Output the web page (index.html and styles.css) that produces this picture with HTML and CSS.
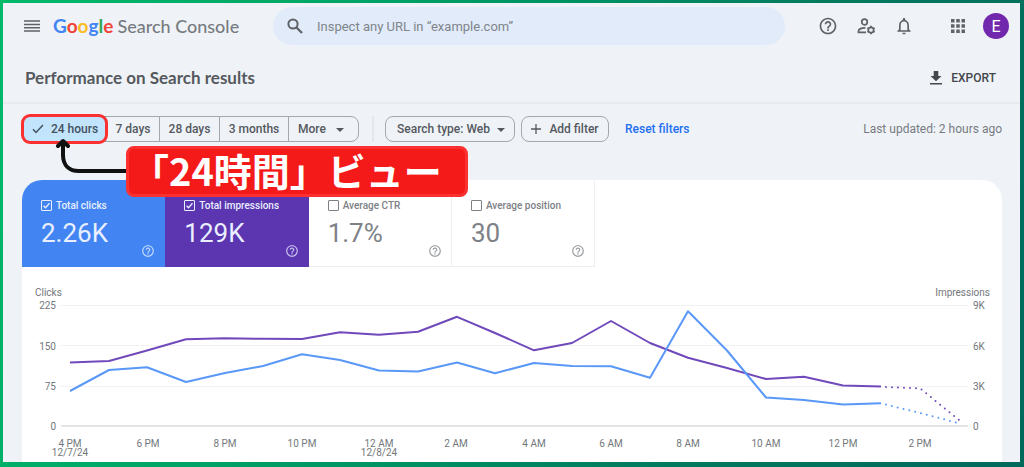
FILE: index.html
```html
<!DOCTYPE html>
<html lang="en">
<head>
<meta charset="utf-8">
<title>Google Search Console</title>
<link rel="stylesheet" href="styles.css">
</head>
<body>
<svg class="defs" aria-hidden="true">
  <symbol id="help" viewBox="0 0 24 24"><path d="M11 18h2v-2h-2v2zm1-16C6.48 2 2 6.48 2 12s4.480 10 10 10 10-4.480 10-10S17.520 2 12 2zm0 18c-4.410 0-8-3.590-8-8s3.590-8 8-8 8 3.590 8 8-3.590 8-8 8zm0-14c-2.210 0-4 1.790-4 4h2c0-1.100.9-2 2-2s2 .9 2 2c0 2-3 1.750-3 5h2c0-2.250 3-2.500 3-5 0-2.210-1.790-4-4-4z"/></symbol>
</svg>
<div class="app">
  <header class="topbar">
    <div class="brand">
      <button class="icon-btn" aria-label="Main menu">
        <svg class="icon-menu" viewBox="0 0 16 12"><path d="M0 1h16M0 4.400h16M0 7.700h16M0 11h16" stroke="currentColor" stroke-width="1.500"/></svg>
      </button>
      <a class="logo" href="#"><span class="wordmark"><span class="g-blue">G</span><span class="g-red">o</span><span class="g-yellow">o</span><span class="g-blue">g</span><span class="g-green">l</span><span class="g-red">e</span></span> <span class="product">Search Console</span></a>
    </div>
    <label class="search">
      <svg class="icon-search outline" viewBox="0 0 16 16" stroke="currentColor"><circle cx="6" cy="6" r="4.600" stroke-width="2"/><path d="M9.500 9.500L15 15" stroke-width="2.300"/></svg>
      <input class="search-input" type="text" aria-label="Inspect URL" placeholder="Inspect any URL in “example.com”">
    </label>
    <div class="tools">
      <button class="icon-btn" aria-label="Help"><svg class="icon-tool"><use href="#help"/></svg></button>
      <button class="icon-btn" aria-label="User settings">
        <svg class="icon-tool outline" viewBox="0 0 20 20" stroke="currentColor" stroke-width="1.700"><circle cx="8.500" cy="6" r="2.800"/><path d="M9.500 12C6 11.600 2.500 13 2.500 15v1.300H10"/><circle cx="15" cy="14" r="2.700"/><path d="M15 9.800v1.500M15 16.700v1.500M11.400 11.900l1.300.8M17.300 15.300l1.300.8M11.400 16.100l1.300-.8M17.300 12.700l1.300-.8"/></svg>
      </button>
      <button class="icon-btn" aria-label="Notifications">
        <svg class="icon-tool" viewBox="0 0 24 24"><path d="M12 22c1.100 0 2-.9 2-2h-4c0 1.100.9 2 2 2zm6-6v-5c0-3.070-1.630-5.640-4.500-6.320V4c0-.83-.67-1.500-1.500-1.500s-1.500.67-1.500 1.500v.68C7.640 5.360 6 7.920 6 11v5l-2 2v1h16v-1l-2-2zm-2 1H8v-6c0-2.480 1.510-4.500 4-4.500s4 2.020 4 4.500v6z"/></svg>
      </button>
      <button class="icon-btn apps" aria-label="Apps">
        <svg class="icon-apps" viewBox="0 0 14 14"><path d="M0 0h3.500v3.500H0zM5.250 0h3.500v3.500h-3.500zM10.500 0H14v3.500h-3.500zM0 5.250h3.500v3.500H0zM5.250 5.250h3.500v3.500h-3.500zM10.500 5.250H14v3.500h-3.500zM0 10.500h3.500V14H0zM5.250 10.500h3.500V14h-3.500zM10.500 10.500H14V14h-3.500z"/></svg>
      </button>
      <button class="avatar" aria-label="Account">E</button>
    </div>
  </header>

  <div class="titlebar">
    <h1 class="title">Performance on Search results</h1>
    <button class="export">
      <svg class="icon-export" viewBox="0 0 12 14"><path d="M3.700 0h4.600v5h3.200L6 10.300.5 5h3.200zM0 12h12v1.600H0z"/></svg>
      EXPORT
    </button>
  </div>

  <main class="content">
    <div class="filters">
      <div class="range">
        <div class="range-current">
          <button class="segment selected" aria-pressed="true">
            <svg class="icon-check outline" viewBox="0 0 12 10" stroke="currentColor" stroke-width="1.500"><path d="M1 5.300l3 3.200L11 1"/></svg>
            24 hours
          </button>
          <span class="highlight"></span>
          <svg class="pointer outline" viewBox="0 0 72 38" stroke="#111" stroke-width="4" stroke-linecap="round" stroke-linejoin="round"><path d="M8 4v13c0 10 6 16 16 16h48M3 8l5-5 5 5"/></svg>
          <strong class="callout" lang="ja">「24時間」ビュー</strong>
        </div>
        <button class="segment seg-7">7 days</button>
        <button class="segment seg-28">28 days</button>
        <button class="segment seg-3m">3 months</button>
        <div class="select-wrap seg-more">
          <select class="select" aria-label="More date ranges"><option>More</option></select>
          <svg class="caret" viewBox="0 0 8 4"><path d="M0 0h8L4 4z"/></svg>
        </div>
      </div>
      <span class="divider"></span>
      <div class="chips">
        <div class="select-wrap chip type">
          <select class="select" aria-label="Search type"><option>Search type: Web</option></select>
          <svg class="caret" viewBox="0 0 8 4"><path d="M0 0h8L4 4z"/></svg>
        </div>
        <button class="chip add">
          <svg class="icon-plus" viewBox="0 0 10 10"><path d="M5 0v10M0 5h10" stroke="currentColor" stroke-width="1.300"/></svg>
          Add filter
        </button>
      </div>
      <a class="reset" href="#">Reset filters</a>
      <span class="updated">Last updated: 2 hours ago</span>
    </div>

    <section class="panel">
      <div class="metrics">
        <div class="metric clicks">
          <label class="metric-label"><input class="box" type="checkbox" checked>Total clicks</label>
          <div class="metric-value">2.26K</div>
          <svg class="hint"><use href="#help"/></svg>
        </div>
        <div class="metric impressions">
          <label class="metric-label"><input class="box" type="checkbox" checked>Total impressions</label>
          <div class="metric-value">129K</div>
          <svg class="hint"><use href="#help"/></svg>
        </div>
        <div class="metric">
          <label class="metric-label"><input class="box" type="checkbox">Average CTR</label>
          <div class="metric-value">1.7%</div>
          <svg class="hint"><use href="#help"/></svg>
        </div>
        <div class="metric">
          <label class="metric-label"><input class="box" type="checkbox">Average position</label>
          <div class="metric-value">30</div>
          <svg class="hint"><use href="#help"/></svg>
        </div>
      </div>
      <svg class="chart" viewBox="22 267 980 195" role="img" aria-label="Clicks and impressions per hour">
        <path class="grid" d="M61 305.500H968M61 345.500H968M61 386.500H968"/>
        <path class="axis" d="M61 426H968"/>
        <g class="labels">
          <text x="35" y="296">Clicks</text>
          <g text-anchor="end">
            <text x="990" y="296">Impressions</text>
            <text x="56" y="309">225</text><text x="56" y="350">150</text><text x="56" y="390">75</text><text x="56" y="430">0</text>
          </g>
          <text x="973" y="309">9K</text><text x="973" y="350">6K</text><text x="973" y="390">3K</text><text x="973" y="430">0</text>
          <g text-anchor="middle">
            <text x="70" y="447">4 PM</text><text x="70" y="456">12/7/24</text>
            <text x="148" y="447">6 PM</text><text x="225" y="447">8 PM</text><text x="302" y="447">10 PM</text>
            <text x="379" y="447">12 AM</text><text x="379" y="456">12/8/24</text>
            <text x="456" y="447">2 AM</text><text x="534" y="447">4 AM</text><text x="611" y="447">6 AM</text>
            <text x="688" y="447">8 AM</text><text x="766" y="447">10 AM</text><text x="843" y="447">12 PM</text><text x="920" y="447">2 PM</text>
          </g>
        </g>
        <g class="line purple">
          <path d="M70 362.500L109 361L147 350.500L186 339.300L225 338.300L263 338.800L302 339L340 332.300L379 334.700L418 331.700L457 316.800L495 333L534 350.300L572 343L611 321L650 343L688 357.700L727 368L766 379L804 376.700L843 385.500L881 386.600"/>
          <path class="pending" d="M886 387L920 388.300L959 420"/>
        </g>
        <g class="line blue">
          <path d="M70 391L109 370L147 367.300L186 382L225 373L263 366L302 354.300L340 360L379 370.500L418 371.500L457 362.500L495 373.300L534 363L572 366L611 366.300L650 377.700L688 311.300L727 350.500L766 397.500L804 400L843 404.500L881 403.300"/>
          <path class="pending" d="M886 404.600L920 413L958 423"/>
        </g>
      </svg>
    </section>
  </main>
</div>
</body>
</html>
```

FILE: styles.css
```css
* { box-sizing: border-box; }

body {
  margin: 0;
  padding: 3px 4px 5px 3px;
  min-height: 100vh;
  display: flex;
  background: linear-gradient(110deg, #00b96a 0%, #00a466 30%, #007a5e 70%, #00695c 100%);
  font-family: Roboto, "Noto Sans CJK JP", sans-serif;
  color: #5f6368;
}

button, input, select { font: inherit; color: inherit; }
button { border: 0; padding: 0; background: none; cursor: pointer; }
a { text-decoration: none; }
svg { fill: currentColor; }
.outline { fill: none; }
.defs { position: absolute; width: 0; height: 0; }

.app {
  flex: 1;
  min-width: 0;
  display: flex;
  flex-direction: column;
  background: #eff3f8;
}

.topbar {
  display: grid;
  grid-template-columns: 250px minmax(200px, 512px) 1fr;
  column-gap: 20px;
  align-items: center;
  padding: 4px 11px 0 0;
}
.brand { display: flex; align-items: center; gap: 13px; padding-left: 21px; }
.icon-btn { display: flex; }
.icon-menu { width: 16px; height: 12px; }
.logo { display: flex; align-items: baseline; gap: 4px; color: #777b80; font-family: Lato, sans-serif; font-size: 18px; line-height: 24px; white-space: nowrap; }
.wordmark { font-size: 19px; font-weight: 700; }
.product { font-weight: 500; }
.g-blue { color: #4285f4; }
.g-red { color: #f04438; }
.g-yellow { color: #fbbc24; }
.g-green { color: #34a853; }

.search {
  display: flex;
  align-items: center;
  gap: 14px;
  height: 38px;
  padding: 0 14px;
  border-radius: 19px;
  background: #e1ebfa;
}
.icon-search { width: 16px; height: 16px; flex: none; }
.search-input { flex: 1; min-width: 0; border: 0; outline: 0; padding: 0; background: none; font-size: 13px; }
.search-input::placeholder { color: #80858b; opacity: 1; }

.tools { display: flex; align-items: center; justify-content: flex-end; gap: 18px; }
.icon-tool { width: 20px; height: 20px; }
.icon-apps { width: 14px; height: 14px; }
.apps { margin-left: 19px; }
.avatar { width: 26px; height: 26px; border-radius: 50%; background: #7128ac; color: #fff; font-size: 16px; }

.titlebar {
  display: flex;
  align-items: center;
  justify-content: space-between;
  height: 59px;
  padding: 8px 24px 0 22px;
  border-bottom: 2px solid #e6e9ee;
}
.title { margin: 0; font-family: Lato, sans-serif; font-size: 17px; font-weight: 700; color: #55595e; }
.export { display: flex; align-items: center; gap: 9px; font-size: 12px; font-weight: 500; color: #44474b; }
.icon-export { width: 12px; height: 14px; }

.content { flex: 1; display: flex; flex-direction: column; padding: 12px 18px 0 19px; }

.filters { display: flex; align-items: center; height: 26px; font-size: 12px; font-weight: 500; color: #55595e; }
.range { display: flex; height: 100%; border: 1px solid #a4a8ad; border-radius: 8px; }
.range-current { position: relative; display: flex; width: 84px; }
.segment { border-right: 1px solid #a4a8ad; white-space: nowrap; }
.selected { display: flex; align-items: center; justify-content: center; gap: 7px; width: 100%; border: 0; border-radius: 7px 0 0 7px; background: #c2e4fd; color: #44525f; }
.icon-check { width: 12px; height: 10px; }
.seg-7 { width: 53px; }
.seg-28 { width: 60px; }
.seg-3m { width: 69px; }
.seg-more { width: 69px; }

.highlight {
  position: absolute;
  inset: -3px -1px -3px -2px;
  border: 3px solid #fb3030;
  border-radius: 9px;
  pointer-events: none;
}
.pointer { position: absolute; left: 32px; top: 21px; width: 72px; height: 38px; z-index: 1; }
.callout {
  position: absolute;
  left: 103px;
  top: 29px;
  z-index: 2;
  width: 342px;
  height: 51px;
  padding-left: 2px;
  border: 3px solid #fb3030;
  border-radius: 8px;
  background: #f51a1a;
  color: #fff;
  font-family: "Noto Sans CJK JP", sans-serif;
  font-size: 38px;
  font-weight: 700;
  line-height: 41px;
  white-space: nowrap;
}

.select-wrap { position: relative; display: flex; }
.select { flex: 1; width: 100%; appearance: none; border: 0; border-radius: 8px; padding: 0 20px 0 9px; background: none; cursor: pointer; }
.caret { position: absolute; right: 9px; top: 11px; width: 8px; height: 4px; pointer-events: none; }
.seg-more .caret { right: 14px; }
.divider { width: 2px; height: 100%; margin: 0 11px 0 13px; background: #e3e6ea; }
.chips { display: flex; gap: 6px; height: 100%; }
.chip { border: 1px solid #a4a8ad; border-radius: 8px; }
.type { width: 130px; }
.type .select { padding-left: 11px; }
.add { display: flex; align-items: center; justify-content: center; gap: 8px; width: 88px; }
.icon-plus { width: 10px; height: 10px; }
.reset { margin-left: 16px; color: #2470f0; }
.updated { margin-left: auto; font-weight: 400; color: #777b80; }

.panel { flex: 1; display: flex; flex-direction: column; margin-top: 38px; background: #fff; border-radius: 20px 20px 0 0; overflow: hidden; }
.metrics { display: grid; grid-template-columns: repeat(4, 1fr); width: 58.5%; }
.metric {
  display: grid;
  grid-template-rows: 16px 31px 14px;
  padding: 17px 9px 8px 19px;
  color: #7d8186;
  border: solid #eeeff1;
  border-width: 0 1px 1px 0;
}
.clicks, .impressions { color: #e9efff; }
.clicks { background: #4285f2; border-color: #4285f2; }
.impressions { background: #5c35b0; border-color: #5c35b0; }
.metric-label { display: flex; align-items: center; gap: 4px; font-size: 10px; font-weight: 500; white-space: nowrap; }
.box { appearance: none; width: 11px; height: 11px; margin: 0; border: 1px solid currentColor; border-radius: 1px; }
.box:checked { background: url("data:image/svg+xml,%3Csvg xmlns='http://www.w3.org/2000/svg' viewBox='0 0 9 9'%3E%3Cpath d='M1.500 4.700l2 2L7.500 2.300' fill='none' stroke='%23e9efff' stroke-width='1.300'/%3E%3C/svg%3E") center / contain no-repeat; }
.metric-value { font-size: 26px; line-height: 41px; }
.hint { justify-self: end; width: 14px; height: 14px; opacity: .8; }

.chart { display: block; width: 100%; }
.grid { stroke: #f1f2f3; fill: none; }
.axis { stroke: #e4e4e5; stroke-width: 2; }
.labels { font-size: 10px; fill: #73777c; }
.line { fill: none; stroke-width: 2; stroke-linejoin: round; }
.purple { stroke: #7049bb; }
.blue { stroke: #5a98f8; }
.pending { stroke-linecap: round; stroke-dasharray: 0 6; }
```
